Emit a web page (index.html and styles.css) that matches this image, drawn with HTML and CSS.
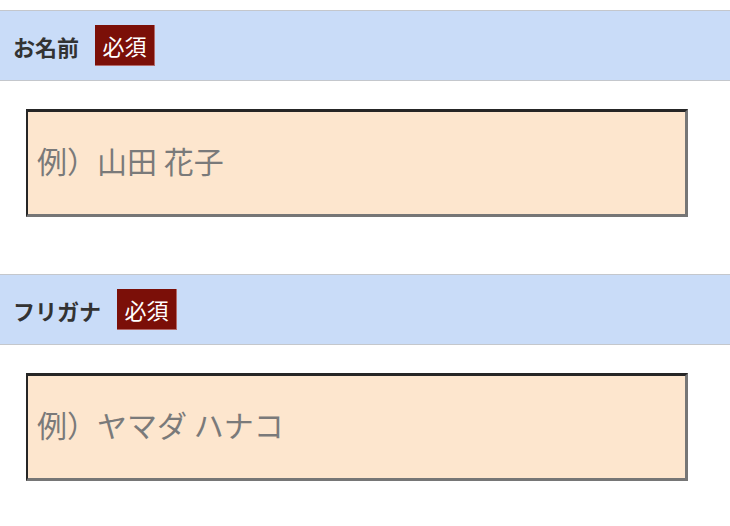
FILE: index.html
```html
<!DOCTYPE html>
<html lang="ja">
<head>
<meta charset="utf-8">
<link rel="stylesheet" href="styles.css">
</head>
<body>
<form class="form">
  <div class="field">
    <div class="field-head">
      <span class="label">お名前</span>
      <span class="badge">必須</span>
    </div>
    <div class="field-body">
      <input class="text-input" type="text" placeholder="例）山田 花子">
    </div>
  </div>
  <div class="field">
    <div class="field-head">
      <span class="label">フリガナ</span>
      <span class="badge">必須</span>
    </div>
    <div class="field-body">
      <input class="text-input" type="text" placeholder="例）ヤマダ ハナコ">
    </div>
  </div>
</form>
</body>
</html>
```

FILE: styles.css
```css
html, body {
  margin: 0;
  padding: 0;
  background: #ffffff;
  font-family: "Noto Sans CJK JP", "Noto Sans", sans-serif;
}

.form {
  margin: 0;
  padding-top: 10px;
}

.field-head {
  display: flex;
  align-items: center;
  gap: 16px;
  height: 69px;
  padding-left: 13px;
  background: #c9dcf8;
  border-top: 1px solid #c4c7cc;
  border-bottom: 1px solid #c4c7cc;
}

.label {
  font-size: 22px;
  font-weight: bold;
  color: #333333;
}

.badge {
  display: flex;
  align-items: center;
  justify-content: center;
  width: 60px;
  height: 41px;
  box-sizing: border-box;
  background: #7b0f08;
  border-right: 1px solid #b26a6a;
  border-bottom: 1px solid #b26a6a;
  color: #ffffff;
  font-size: 22px;
}

.field-body {
  padding: 28px 0 57px 26px;
}

.text-input {
  display: block;
  box-sizing: border-box;
  width: 662px;
  height: 108px;
  margin: 0;
  padding: 0 0 6px 9px;
  background: #fde6ce;
  border-style: solid;
  border-width: 3px 3px 3px 2px;
  border-color: #262626 #767676 #767676 #262626;
  font-family: "Noto Sans CJK JP", "Noto Sans", sans-serif;
  font-size: 30px;
  color: #333333;
  outline: none;
}

.text-input::placeholder {
  color: #7a7a7a;
  opacity: 1;
}
```
